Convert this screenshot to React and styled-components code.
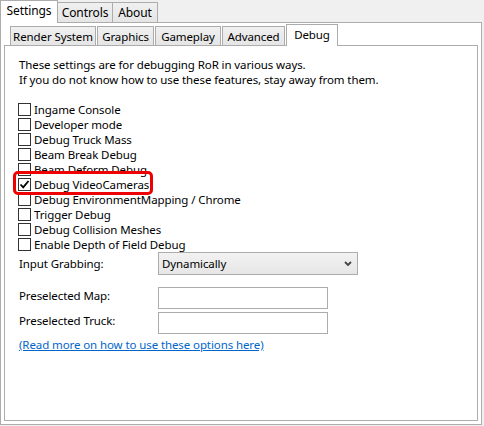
import React from "react";
import styled, { createGlobalStyle } from "styled-components";

const GlobalStyle = createGlobalStyle`
  html, body { margin: 0; padding: 0; background: #f0f0f0; }
  body {
    font-family: "Noto Sans", "Open Sans", "DejaVu Sans", sans-serif;
    font-size: 11.5px;
    letter-spacing: -0.1px;
    line-height: 15px;
    color: #000;
  }
  * { box-sizing: border-box; }
`;

const Window = styled.div`
  width: 484px;
  height: 426px;
  display: flex;
  flex-direction: column;
`;

const OuterStrip = styled.div`
  display: flex;
  align-items: flex-end;
  height: 22px;
  position: relative;
  z-index: 1;
`;

const OuterTab = styled.div`
  width: ${(p) => p.$w}px;
  height: ${(p) => (p.$active ? 23 : 20)}px;
  margin-bottom: ${(p) => (p.$active ? -1 : 0)}px;
  border: 1px solid #acacac;
  border-bottom: none;
  background: ${(p) => (p.$active ? "#fff" : "linear-gradient(#f0f0f0, #e5e5e5)")};
  display: flex;
  align-items: center;
  justify-content: center;
  padding-bottom: ${(p) => (p.$active ? 4 : 0)}px;
  margin-left: ${(p) => (p.$active ? 0 : -1)}px;
  white-space: nowrap;
  font-size: 12px;
  &:first-child { margin-left: 0; }
`;

const OuterPane = styled.div`
  width: 482px;
  height: 403px;
  border: 1px solid #acacac;
  background: #fff;
  padding: 1px 3px 3px 3px;
  display: flex;
  flex-direction: column;
`;

const InnerStrip = styled.div`
  display: flex;
  align-items: flex-end;
  height: 21px;
  padding-left: 6px;
  position: relative;
  z-index: 1;
`;

const InnerTab = styled.div`
  width: ${(p) => p.$w}px;
  height: ${(p) => (p.$active ? 22 : 19)}px;
  margin-bottom: ${(p) => (p.$active ? -1 : 0)}px;
  margin-right: ${(p) => (p.$active ? 0 : 1)}px;
  border: 1px solid #acacac;
  border-bottom: none;
  background: ${(p) => (p.$active ? "#fff" : "linear-gradient(#f0f0f0, #e5e5e5)")};
  display: flex;
  align-items: center;
  justify-content: center;
  padding-bottom: ${(p) => (p.$active ? 3 : 0)}px;
  white-space: nowrap;
  font-size: 11.5px;
`;

const InnerPane = styled.div`
  flex: 1;
  border: 1px solid #acacac;
  background: #fff;
  padding: 11px 14px 0 14px;
  position: relative;
  display: flex;
  flex-direction: column;
`;

const Intro = styled.p`
  margin: 0 0 15px 0;
  line-height: 15px;
  white-space: nowrap;
`;

const CheckList = styled.div`
  display: flex;
  flex-direction: column;
`;

const CheckRow = styled.label`
  display: flex;
  align-items: center;
  height: 15px;
  line-height: 15px;
  gap: 3px;
  margin-left: -1px;
  white-space: nowrap;
`;

const Box = styled.span`
  width: 13px;
  height: 13px;
  border: 1px solid #333;
  background: #fff;
  display: flex;
  align-items: center;
  justify-content: center;
  flex: none;
`;

const Highlight = styled.div`
  position: absolute;
  left: 8px;
  top: 125px;
  width: 140px;
  height: 24px;
  border: 3.5px solid #ee0000;
  border-radius: 5px;
  pointer-events: none;
`;

const FieldRow = styled.div`
  display: flex;
  align-items: center;
  margin-top: ${(p) => p.$mt || 0}px;
`;

const FieldLabel = styled.span`
  width: 139px;
  padding-bottom: ${(p) => p.$raise || 0}px;
  white-space: nowrap;
`;

const Select = styled.div`
  width: 200px;
  height: 23px;
  border: 1px solid #acacac;
  background: linear-gradient(#f2f2f2, #e6e6e6);
  display: flex;
  align-items: center;
  justify-content: space-between;
  padding: 0 5px 0 3px;
`;

const TextBox = styled.div`
  width: 170px;
  height: 22px;
  border: 1px solid #acacac;
  background: #fff;
`;

const Link = styled.a`
  color: #0066cc;
  text-decoration: underline;
  line-height: 15px;
  margin-top: 3px;
  cursor: pointer;
  align-self: flex-start;
  white-space: nowrap;
`;

const checks = [
  ["Ingame Console", false],
  ["Developer mode", false],
  ["Debug Truck Mass", false],
  ["Beam Break Debug", false],
  ["Beam Deform Debug", false],
  ["Debug VideoCameras", true],
  ["Debug EnvironmentMapping / Chrome", false],
  ["Trigger Debug", false],
  ["Debug Collision Meshes", false],
  ["Enable Depth of Field Debug", false],
];

const Check = () => (
  <svg width="11" height="11" viewBox="0 0 11 11">
    <path d="M1.5 5.5 L4.2 8.3 L9.5 2" fill="none" stroke="#000" strokeWidth="1.8" />
  </svg>
);

const Chevron = () => (
  <svg width="8" height="6" viewBox="0 0 8 6">
    <path d="M1 1 L4 4 L7 1" fill="none" stroke="#444" strokeWidth="1.8" />
  </svg>
);

export default function App() {
  return (
    <Window>
      <GlobalStyle />
      <OuterStrip>
        <OuterTab $w={58} $active>Settings</OuterTab>
        <OuterTab $w={56}>Controls</OuterTab>
        <OuterTab $w={46}>About</OuterTab>
      </OuterStrip>
      <OuterPane>
        <InnerStrip>
          <InnerTab $w={86}>Render System</InnerTab>
          <InnerTab $w={57}>Graphics</InnerTab>
          <InnerTab $w={66}>Gameplay</InnerTab>
          <InnerTab $w={63}>Advanced</InnerTab>
          <InnerTab $w={52} $active>Debug</InnerTab>
        </InnerStrip>
        <InnerPane>
          <Intro>
            These settings are for debugging RoR in various ways.
            <br />
            If you do not know how to use these features, stay away from them.
          </Intro>
          <CheckList>
            {checks.map(([label, on]) => (
              <CheckRow key={label}>
                <Box>{on && <Check />}</Box>
                {label}
              </CheckRow>
            ))}
          </CheckList>
          <FieldRow>
            <FieldLabel>Input Grabbing:</FieldLabel>
            <Select>
              <span>Dynamically</span>
              <Chevron />
            </Select>
          </FieldRow>
          <FieldRow $mt={12}>
            <FieldLabel $raise={5}>Preselected Map:</FieldLabel>
            <TextBox />
          </FieldRow>
          <FieldRow $mt={3}>
            <FieldLabel $raise={5}>Preselected Truck:</FieldLabel>
            <TextBox />
          </FieldRow>
          <Link>(Read more on how to use these options here)</Link>
          <Highlight />
        </InnerPane>
      </OuterPane>
    </Window>
  );
}
